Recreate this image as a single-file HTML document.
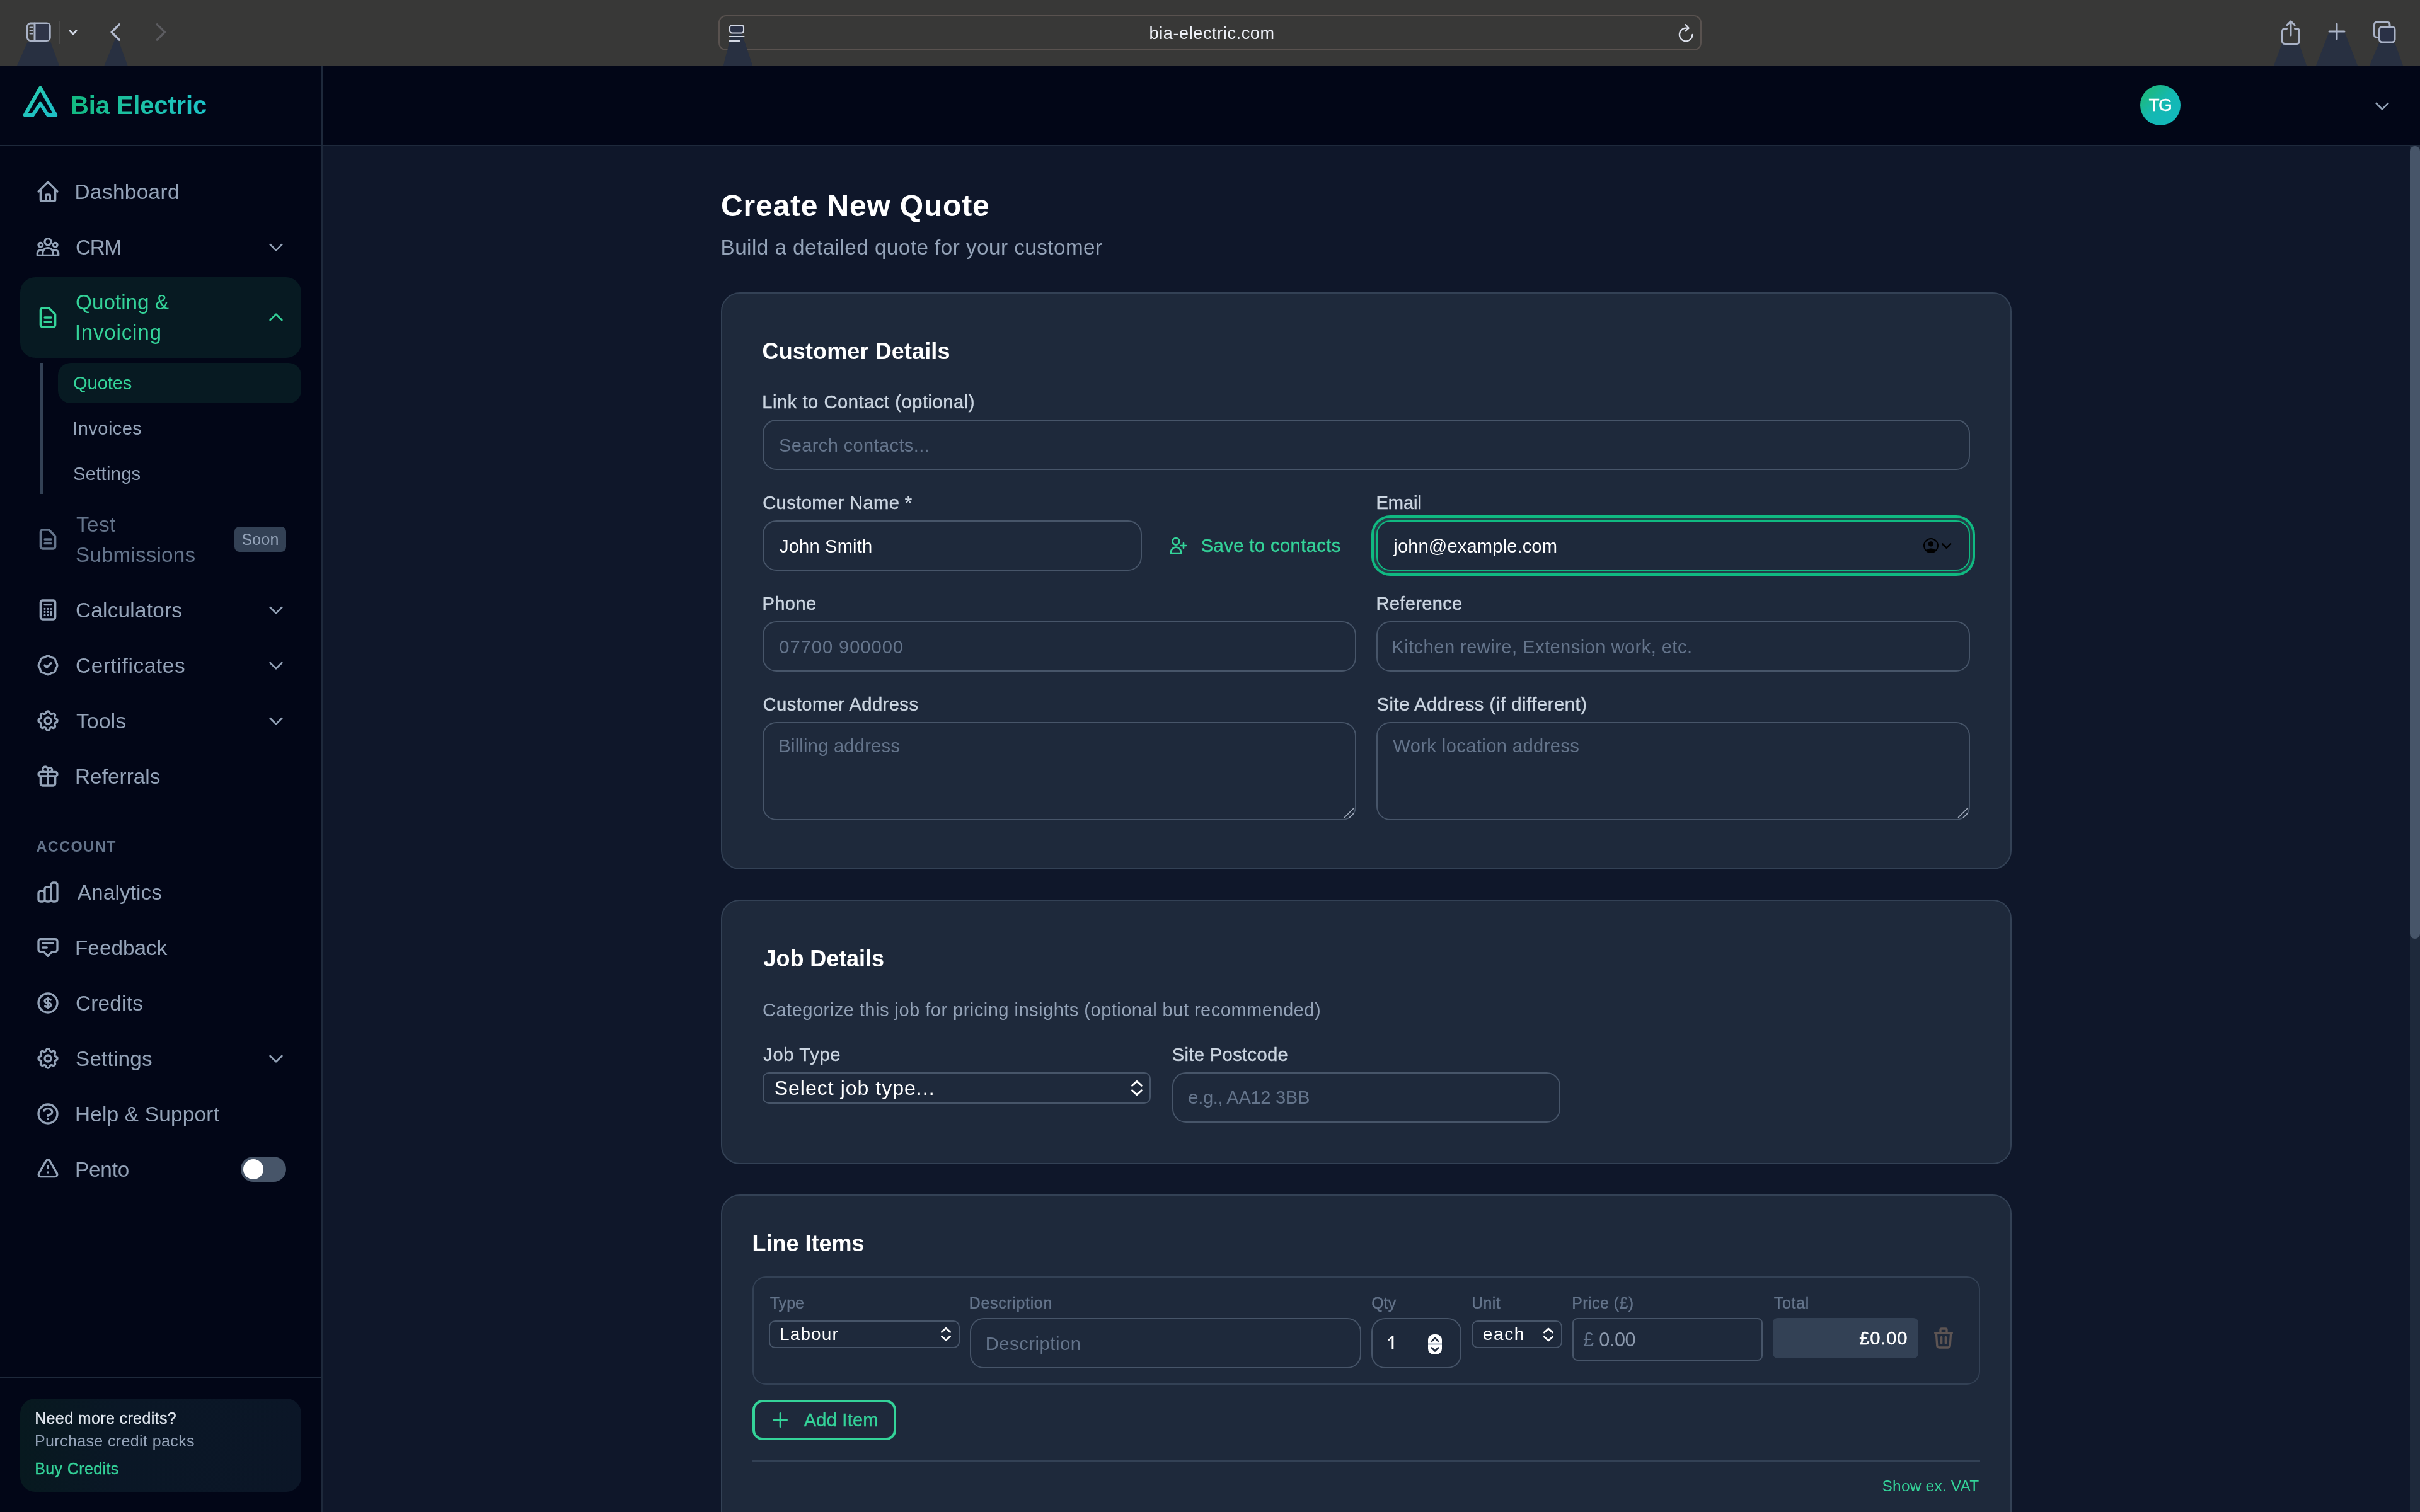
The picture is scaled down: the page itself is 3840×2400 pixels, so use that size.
<!DOCTYPE html>
<html lang="en"><head><meta charset="utf-8"><title>Create New Quote - Bia Electric</title>
<style>
*{box-sizing:border-box;margin:0;padding:0}
html,body{width:3840px;height:2400px;background:#0f172a}
body{font-family:"Liberation Sans",sans-serif;position:relative}
#root{position:absolute;left:0;top:0;width:3840px;height:2400px;overflow:hidden;will-change:transform}
.b{position:absolute;display:block}
.t{position:absolute;white-space:nowrap;font-family:"Liberation Sans",sans-serif}
</style></head>
<body>
<div id="root">
<div class="b" style="left:0px;top:0px;width:3840px;height:104px;background:#383837;"></div>
<svg class="b" style="left:0;top:0" width="3840" height="104"><polygon points="44,66 80,66 94,104 27,104" fill="#283041"/></svg>
<svg class="b" style="left:0;top:0" width="3840" height="104"><polygon points="183.5,60 186.5,60 202.5,104 165.5,104" fill="#283041"/></svg>
<svg class="b" style="left:0;top:0" width="3840" height="104"><polygon points="1161,53 1177,53 1194,104 1148,104" fill="#283041"/></svg>
<svg class="b" style="left:0;top:0" width="3840" height="104"><polygon points="3621,69 3648,69 3660,104 3608,104" fill="#283041"/></svg>
<svg class="b" style="left:0;top:0" width="3840" height="104"><polygon points="3696,50 3720,50 3741,104 3675,104" fill="#283041"/></svg>
<svg class="b" style="left:0;top:0" width="3840" height="104"><polygon points="3775,68 3800,68 3813,104 3760,104" fill="#283041"/></svg>
<svg class="b" style="left:40px;top:33px;" width="44" height="36" viewBox="0 0 44 36" fill="none" stroke="#aab3c7" stroke-width="3" stroke-linecap="round" stroke-linejoin="round"><rect x="3.5" y="4.1" width="35.7" height="27.4" rx="5" fill="none"/><rect x="16" y="5" width="22" height="25.6" fill="#2f3548" stroke="none"/><path d="M15 4.1v27.4"/><path d="M7.5 10.5h4M7.5 15.5h4M7.5 20.5h4" stroke-width="1.8"/></svg>
<div class="b" style="left:94px;top:34px;width:2px;height:36px;background:#4a4a4a;"></div>
<svg class="b" style="left:105.5px;top:42px;" width="20" height="20" viewBox="0 0 20 20" fill="none" stroke="#d3d9e6" stroke-width="3" stroke-linecap="round" stroke-linejoin="round"><path d="M5 6.8l5 5.2 5-5.2"/></svg>
<svg class="b" style="left:170px;top:32px;" width="28" height="38" viewBox="0 0 28 38" fill="none" stroke="#b4bccf" stroke-width="3.2" stroke-linecap="round" stroke-linejoin="round"><path d="M19.2 6.8L7 19l12.2 12.2"/></svg>
<svg class="b" style="left:242px;top:32px;" width="28" height="38" viewBox="0 0 28 38" fill="none" stroke="#5c5c60" stroke-width="3.2" stroke-linecap="round" stroke-linejoin="round"><path d="M7.2 6.8L19.4 19 7.2 31.2"/></svg>
<div class="b" style="left:1140px;top:24px;width:1560px;height:56px;border:2px solid #59524f;border-radius:12px;"></div>
<svg class="b" style="left:0;top:0" width="3840" height="104"><polygon points="1161,53 1177,53 1194,104 1148,104" fill="#283041"/></svg>
<svg class="b" style="left:1154px;top:36px;" width="30" height="34" viewBox="0 0 30 34" fill="none" stroke="#d3d8e4" stroke-width="2.1" stroke-linecap="round" stroke-linejoin="round"><rect x="4" y="4" width="22" height="12.5" rx="3.5" fill="#2a3146"/><path d="M3.5 22h23M3.5 29h16" stroke-width="2.2"/></svg>
<div class="t" style="left:1823.5px;top:33.53px;font-size:27.04px;line-height:39px;color:#eef1f8;letter-spacing:0.616px;">bia-electric.com</div>
<svg class="b" style="left:2660px;top:34.7px;" width="32" height="34" viewBox="0 0 32 34" fill="none" stroke="#dde1ec" stroke-width="2.3" stroke-linecap="round" stroke-linejoin="round"><path d="M25.5 20a10.3 10.3 0 1 1-10.3-10.3h3.3"/><path d="M14.8 4.2l4.9 5.5-5.6 4.6"/></svg>
<svg class="b" style="left:3616px;top:29px;" width="38" height="44" viewBox="0 0 38 44" fill="none" stroke="#aab3c7" stroke-width="3" stroke-linecap="round" stroke-linejoin="round"><path d="M12.5 16.5H9.5a4 4 0 0 0-4 4v16a4 4 0 0 0 4 4h19a4 4 0 0 0 4-4v-16a4 4 0 0 0-4-4h-3"/><path d="M19 27V5.5M12.8 11l6.2-6.2 6.2 6.2"/></svg>
<svg class="b" style="left:3691.6px;top:34.3px;" width="32" height="32" viewBox="0 0 32 32" fill="none" stroke="#aab3c7" stroke-width="3" stroke-linecap="round" stroke-linejoin="round"><path d="M16 4v24M4 16h24"/></svg>
<svg class="b" style="left:3762px;top:30px;" width="44" height="42" viewBox="0 0 44 42" fill="none" stroke="#aab3c7" stroke-width="3" stroke-linecap="round" stroke-linejoin="round"><path d="M12 29.5H9.5a4 4 0 0 1-4-4V9a4 4 0 0 1 4-4h16.5a4 4 0 0 1 4 4v2"/><rect x="13.5" y="12.5" width="24.5" height="24.5" rx="4.5" fill="#2a3146"/></svg>
<div class="b" style="left:0px;top:104px;width:3840px;height:128px;background:#020617;border-bottom:2px solid #1e293b;"></div>
<div class="b" style="left:0px;top:232px;width:512px;height:2168px;background:#020617;"></div>
<div class="b" style="left:510px;top:104px;width:2px;height:2296px;background:#1e293b;"></div>
<svg class="b" style="left:30px;top:128px" width="70" height="66" viewBox="30 128 70 66"><defs><linearGradient id="lg" x1="40" y1="136" x2="70" y2="170" gradientUnits="userSpaceOnUse"><stop offset="0" stop-color="#41e39a"/><stop offset="0.45" stop-color="#25c7b3"/><stop offset="1" stop-color="#1fc0c4"/></linearGradient></defs><path d="M64 139.5L39.5 182.6H52L64 164.5l12 18.1h12.5Z" fill="none" stroke="url(#lg)" stroke-width="5.6" stroke-linejoin="round"/></svg>
<div class="t" style="left:112px;top:136.63px;font-size:40.0px;line-height:60px;color:#10b981;font-weight:700;letter-spacing:-0.15px;background:linear-gradient(90deg,#12b981 0%,#1cbf9f 40%,#1cc4c8 100%);-webkit-background-clip:text;background-clip:text;color:transparent;">Bia Electric</div>
<div class="b" style="left:3396px;top:135px;width:64px;height:64px;background:linear-gradient(135deg,#1fba7a 0%,#1bb98c 25%,#14b8b2 50%,#12b8bf 100%);border-radius:32px;"></div>
<div class="t" style="left:3409.5px;top:147.06px;font-size:28.08px;line-height:40px;color:#ffffff;letter-spacing:-1.751px;-webkit-text-stroke:0.4px #ffffff;">TG</div>
<svg class="b" style="left:3764.0px;top:152.0px;" width="32" height="32" viewBox="0 0 24 24" fill="none" stroke="#94a3b8" stroke-width="2" stroke-linecap="round" stroke-linejoin="round"><path d="M19 9l-7 7-7-7"/></svg>
<svg class="b" style="left:56.0px;top:284.0px;" width="40" height="40" viewBox="0 0 24 24" fill="none" stroke="#94a3b8" stroke-width="2" stroke-linecap="round" stroke-linejoin="round"><path d="M3 12l2-2m0 0l7-7 7 7M5 10v10a1 1 0 001 1h3m10-11l2 2m-2-2v10a1 1 0 01-1 1h-3m-6 0a1 1 0 001-1v-4a1 1 0 011-1h2a1 1 0 011 1v4a1 1 0 001 1m-6 0h6"/></svg>
<div class="t" style="left:118.6px;top:280.86px;font-size:33.28px;line-height:48px;color:#94a3b8;letter-spacing:0.395px;">Dashboard</div>
<svg class="b" style="left:56.0px;top:372.0px;" width="40" height="40" viewBox="0 0 24 24" fill="none" stroke="#94a3b8" stroke-width="2" stroke-linecap="round" stroke-linejoin="round"><path d="M17 20h5v-2a3 3 0 00-5.356-1.857M17 20H7m10 0v-2c0-.656-.126-1.283-.356-1.857M7 20H2v-2a3 3 0 015.356-1.857M7 20v-2c0-.656.126-1.283.356-1.857m0 0a5.002 5.002 0 019.288 0M15 7a3 3 0 11-6 0 3 3 0 016 0zm6 3a2 2 0 11-4 0 2 2 0 014 0zM7 10a2 2 0 11-4 0 2 2 0 014 0z"/></svg>
<div class="t" style="left:120px;top:368.86px;font-size:33.28px;line-height:48px;color:#94a3b8;letter-spacing:-1.373px;">CRM</div>
<svg class="b" style="left:422.0px;top:376.0px;" width="32" height="32" viewBox="0 0 24 24" fill="none" stroke="#94a3b8" stroke-width="2" stroke-linecap="round" stroke-linejoin="round"><path d="M19 9l-7 7-7-7"/></svg>
<div class="b" style="left:32px;top:440px;width:446px;height:128px;background:#071a22;border-radius:24px;"></div>
<svg class="b" style="left:56.0px;top:484.0px;" width="40" height="40" viewBox="0 0 24 24" fill="none" stroke="#34d399" stroke-width="2" stroke-linecap="round" stroke-linejoin="round"><path d="M9 12h6m-6 4h6m2 5H7a2 2 0 01-2-2V5a2 2 0 012-2h5.586a1 1 0 01.707.293l5.414 5.414a1 1 0 01.293.707V19a2 2 0 01-2 2z"/></svg>
<div class="t" style="left:120px;top:456.46px;font-size:33.28px;line-height:48px;color:#34d399;letter-spacing:0.006px;">Quoting &amp;</div>
<div class="t" style="left:118.7px;top:504.46px;font-size:33.28px;line-height:48px;color:#34d399;letter-spacing:0.751px;">Invoicing</div>
<svg class="b" style="left:422.0px;top:488.0px;" width="32" height="32" viewBox="0 0 24 24" fill="none" stroke="#34d399" stroke-width="2" stroke-linecap="round" stroke-linejoin="round"><path d="M5 15l7-7 7 7"/></svg>
<div class="b" style="left:64px;top:576px;width:4px;height:208px;background:#334155;"></div>
<div class="b" style="left:92px;top:576px;width:386px;height:64px;background:#071a22;border-radius:20px;"></div>
<div class="t" style="left:116px;top:586.9px;font-size:29.12px;line-height:42px;color:#34d399;letter-spacing:-0.1px;">Quotes</div>
<div class="t" style="left:115.3px;top:658.9px;font-size:29.12px;line-height:42px;color:#94a3b8;letter-spacing:0.395px;">Invoices</div>
<div class="t" style="left:116px;top:731.2px;font-size:29.12px;line-height:42px;color:#94a3b8;letter-spacing:0.282px;">Settings</div>
<svg class="b" style="left:56.0px;top:836.0px;" width="40" height="40" viewBox="0 0 24 24" fill="none" stroke="#64748b" stroke-width="2" stroke-linecap="round" stroke-linejoin="round"><path d="M9 12h6m-6 4h6m2 5H7a2 2 0 01-2-2V5a2 2 0 012-2h5.586a1 1 0 01.707.293l5.414 5.414a1 1 0 01.293.707V19a2 2 0 01-2 2z"/></svg>
<div class="t" style="left:121px;top:809.26px;font-size:33.28px;line-height:48px;color:#64748b;letter-spacing:0.412px;">Test</div>
<div class="t" style="left:120px;top:856.96px;font-size:33.28px;line-height:48px;color:#64748b;letter-spacing:0.145px;">Submissions</div>
<div class="b" style="left:372px;top:836px;width:82px;height:40px;background:#334155;border-radius:8px;"></div>
<div class="t" style="left:383.5px;top:837.85px;font-size:24.96px;line-height:36px;color:#94a3b8;letter-spacing:0.2px;">Soon</div>
<svg class="b" style="left:56.0px;top:948.0px;" width="40" height="40" viewBox="0 0 24 24" fill="none" stroke="#94a3b8" stroke-width="2" stroke-linecap="round" stroke-linejoin="round"><path d="M9 7h6m0 10v-3m-3 3h.01M9 17h.01M9 14h.01M12 14h.01M15 11h.01M12 11h.01M9 11h.01M7 21h10a2 2 0 002-2V5a2 2 0 00-2-2H7a2 2 0 00-2 2v14a2 2 0 002 2z"/></svg>
<div class="t" style="left:120px;top:944.86px;font-size:33.28px;line-height:48px;color:#94a3b8;letter-spacing:0.244px;">Calculators</div>
<svg class="b" style="left:422.0px;top:952.0px;" width="32" height="32" viewBox="0 0 24 24" fill="none" stroke="#94a3b8" stroke-width="2" stroke-linecap="round" stroke-linejoin="round"><path d="M19 9l-7 7-7-7"/></svg>
<svg class="b" style="left:56.0px;top:1036.0px;" width="40" height="40" viewBox="0 0 24 24" fill="none" stroke="#94a3b8" stroke-width="2" stroke-linecap="round" stroke-linejoin="round"><path d="M9 12l2 2 4-4M7.835 4.697a3.42 3.42 0 001.946-.806 3.42 3.42 0 014.438 0 3.42 3.42 0 001.946.806 3.42 3.42 0 013.138 3.138 3.42 3.42 0 00.806 1.946 3.42 3.42 0 010 4.438 3.42 3.42 0 00-.806 1.946 3.42 3.42 0 01-3.138 3.138 3.42 3.42 0 00-1.946.806 3.42 3.42 0 01-4.438 0 3.42 3.42 0 00-1.946-.806 3.42 3.42 0 01-3.138-3.138 3.42 3.42 0 00-.806-1.946 3.42 3.42 0 010-4.438 3.42 3.42 0 00.806-1.946 3.42 3.42 0 013.138-3.138z"/></svg>
<div class="t" style="left:120px;top:1032.86px;font-size:33.28px;line-height:48px;color:#94a3b8;letter-spacing:0.66px;">Certificates</div>
<svg class="b" style="left:422.0px;top:1040.0px;" width="32" height="32" viewBox="0 0 24 24" fill="none" stroke="#94a3b8" stroke-width="2" stroke-linecap="round" stroke-linejoin="round"><path d="M19 9l-7 7-7-7"/></svg>
<svg class="b" style="left:56.0px;top:1124.0px;" width="40" height="40" viewBox="0 0 24 24" fill="none" stroke="#94a3b8" stroke-width="2" stroke-linecap="round" stroke-linejoin="round"><path d="M10.325 4.317c.426-1.756 2.924-1.756 3.35 0a1.724 1.724 0 002.573 1.066c1.543-.94 3.31.826 2.37 2.37a1.724 1.724 0 001.065 2.572c1.756.426 1.756 2.924 0 3.35a1.724 1.724 0 00-1.066 2.573c.94 1.543-.826 3.31-2.37 2.37a1.724 1.724 0 00-2.572 1.065c-.426 1.756-2.924 1.756-3.35 0a1.724 1.724 0 00-2.573-1.066c-1.543.94-3.31-.826-2.37-2.37a1.724 1.724 0 00-1.065-2.572c-1.756-.426-1.756-2.924 0-3.35a1.724 1.724 0 001.066-2.573c-.94-1.543.826-3.31 2.37-2.37.996.608 2.296.07 2.572-1.065zM15 12a3 3 0 11-6 0 3 3 0 016 0z"/></svg>
<div class="t" style="left:121px;top:1120.86px;font-size:33.28px;line-height:48px;color:#94a3b8;letter-spacing:0.394px;">Tools</div>
<svg class="b" style="left:422.0px;top:1128.0px;" width="32" height="32" viewBox="0 0 24 24" fill="none" stroke="#94a3b8" stroke-width="2" stroke-linecap="round" stroke-linejoin="round"><path d="M19 9l-7 7-7-7"/></svg>
<svg class="b" style="left:56.0px;top:1212.0px;" width="40" height="40" viewBox="0 0 24 24" fill="none" stroke="#94a3b8" stroke-width="2" stroke-linecap="round" stroke-linejoin="round"><path d="M12 8v13m0-13V6a2 2 0 112 2h-2zm0 0V5.5A2.5 2.5 0 109.5 8H12zm-7 4h14M5 12a2 2 0 110-4h14a2 2 0 110 4M5 12v7a2 2 0 002 2h10a2 2 0 002-2v-7"/></svg>
<div class="t" style="left:119px;top:1208.86px;font-size:33.28px;line-height:48px;color:#94a3b8;letter-spacing:0.061px;">Referrals</div>
<div class="t" style="left:57.5px;top:1325.85px;font-size:23.52px;line-height:36px;color:#64748b;font-weight:700;letter-spacing:1.383px;">ACCOUNT</div>
<svg class="b" style="left:56.0px;top:1396.0px;" width="40" height="40" viewBox="0 0 24 24" fill="none" stroke="#94a3b8" stroke-width="2" stroke-linecap="round" stroke-linejoin="round"><path d="M9 19v-6a2 2 0 00-2-2H5a2 2 0 00-2 2v6a2 2 0 002 2h2a2 2 0 002-2zm0 0V9a2 2 0 012-2h2a2 2 0 012 2v10m-6 0a2 2 0 002 2h2a2 2 0 002-2m0 0V5a2 2 0 012-2h2a2 2 0 012 2v14a2 2 0 01-2 2h-2a2 2 0 01-2-2z"/></svg>
<div class="t" style="left:122.8px;top:1392.86px;font-size:33.28px;line-height:48px;color:#94a3b8;letter-spacing:0.14px;">Analytics</div>
<svg class="b" style="left:56.0px;top:1484.0px;" width="40" height="40" viewBox="0 0 24 24" fill="none" stroke="#94a3b8" stroke-width="2" stroke-linecap="round" stroke-linejoin="round"><path d="M7 8h10M7 12h4m1 8l-4-4H5a2 2 0 01-2-2V6a2 2 0 012-2h14a2 2 0 012 2v8a2 2 0 01-2 2h-3l-4 4z"/></svg>
<div class="t" style="left:119px;top:1480.86px;font-size:33.28px;line-height:48px;color:#94a3b8;letter-spacing:0.049px;">Feedback</div>
<svg class="b" style="left:56.0px;top:1572.0px;" width="40" height="40" viewBox="0 0 24 24" fill="none" stroke="#94a3b8" stroke-width="2" stroke-linecap="round" stroke-linejoin="round"><path d="M12 8c-1.657 0-3 .895-3 2s1.343 2 3 2 3 .895 3 2-1.343 2-3 2m0-8c1.11 0 2.08.402 2.599 1M12 8V7m0 1v8m0 0v1m0-1c-1.11 0-2.08-.402-2.599-1M21 12a9 9 0 11-18 0 9 9 0 0118 0z"/></svg>
<div class="t" style="left:120px;top:1568.86px;font-size:33.28px;line-height:48px;color:#94a3b8;letter-spacing:0.244px;">Credits</div>
<svg class="b" style="left:56.0px;top:1660.0px;" width="40" height="40" viewBox="0 0 24 24" fill="none" stroke="#94a3b8" stroke-width="2" stroke-linecap="round" stroke-linejoin="round"><path d="M10.325 4.317c.426-1.756 2.924-1.756 3.35 0a1.724 1.724 0 002.573 1.066c1.543-.94 3.31.826 2.37 2.37a1.724 1.724 0 001.065 2.572c1.756.426 1.756 2.924 0 3.35a1.724 1.724 0 00-1.066 2.573c.94 1.543-.826 3.31-2.37 2.37a1.724 1.724 0 00-2.572 1.065c-.426 1.756-2.924 1.756-3.35 0a1.724 1.724 0 00-2.573-1.066c-1.543.94-3.31-.826-2.37-2.37a1.724 1.724 0 00-1.065-2.572c-1.756-.426-1.756-2.924 0-3.35a1.724 1.724 0 001.066-2.573c-.94-1.543.826-3.31 2.37-2.37.996.608 2.296.07 2.572-1.065zM15 12a3 3 0 11-6 0 3 3 0 016 0z"/></svg>
<div class="t" style="left:120px;top:1656.86px;font-size:33.28px;line-height:48px;color:#94a3b8;letter-spacing:0.205px;">Settings</div>
<svg class="b" style="left:422.0px;top:1664.0px;" width="32" height="32" viewBox="0 0 24 24" fill="none" stroke="#94a3b8" stroke-width="2" stroke-linecap="round" stroke-linejoin="round"><path d="M19 9l-7 7-7-7"/></svg>
<svg class="b" style="left:56.0px;top:1748.0px;" width="40" height="40" viewBox="0 0 24 24" fill="none" stroke="#94a3b8" stroke-width="2" stroke-linecap="round" stroke-linejoin="round"><path d="M8.228 9c.549-1.165 2.03-2 3.772-2 2.21 0 4 1.343 4 3 0 1.4-1.278 2.575-3.006 2.907-.542.104-.994.54-.994 1.093m0 3h.01M21 12a9 9 0 11-18 0 9 9 0 0118 0z"/></svg>
<div class="t" style="left:119px;top:1744.86px;font-size:33.28px;line-height:48px;color:#94a3b8;letter-spacing:0.242px;">Help &amp; Support</div>
<svg class="b" style="left:56.0px;top:1836.0px;" width="40" height="40" viewBox="0 0 24 24" fill="none" stroke="#94a3b8" stroke-width="2" stroke-linecap="round" stroke-linejoin="round"><path d="M12 9v2m0 4h.01m-6.938 4h13.856c1.54 0 2.502-1.667 1.732-3L13.732 4c-.77-1.333-2.694-1.333-3.464 0L3.34 16c-.77 1.333.192 3 1.732 3z"/></svg>
<div class="t" style="left:119px;top:1832.86px;font-size:33.28px;line-height:48px;color:#94a3b8;letter-spacing:-0.183px;">Pento</div>
<div class="b" style="left:382px;top:1836px;width:72px;height:40px;background:#475569;border-radius:20px;"></div>
<div class="b" style="left:386px;top:1840px;width:32px;height:32px;background:#ffffff;border-radius:16px;"></div>
<div class="b" style="left:0px;top:2186px;width:510px;height:2px;background:#1e293b;"></div>
<div class="b" style="left:32px;top:2220px;width:446px;height:148px;background:linear-gradient(90deg,#07191f 0%,#0a1726 35%,#0b1627 100%);border-radius:24px;"></div>
<div class="t" style="left:55.18px;top:2233.15px;font-size:24.96px;line-height:36px;color:#e2e8f0;letter-spacing:0.399px;-webkit-text-stroke:0.36px #e2e8f0;">Need more credits?</div>
<div class="t" style="left:55px;top:2269.15px;font-size:24.96px;line-height:36px;color:#94a3b8;letter-spacing:0.4px;">Purchase credit packs</div>
<div class="t" style="left:55.18px;top:2313.15px;font-size:24.96px;line-height:36px;color:#34d399;letter-spacing:0.415px;-webkit-text-stroke:0.36px #34d399;">Buy Credits</div>
<div class="b" style="left:3824px;top:232px;width:16px;height:2168px;background:#1e293b;"></div>
<div class="b" style="left:3824px;top:232px;width:16px;height:1258px;background:#475569;border-radius:8px;"></div>
<div class="t" style="left:1144px;top:291.36px;font-size:48.0px;line-height:72px;color:#ffffff;font-weight:700;letter-spacing:0.817px;">Create New Quote</div>
<div class="t" style="left:1143.5px;top:368.96px;font-size:33.28px;line-height:48px;color:#94a3b8;letter-spacing:0.45px;">Build a detailed quote for your customer</div>
<div class="b" style="left:1144px;top:464px;width:2048px;height:916px;background:#1e293b;border:2px solid #334155;border-radius:30px;"></div>
<div class="t" style="left:1209.5px;top:530.82px;font-size:36.0px;line-height:54px;color:#ffffff;font-weight:700;letter-spacing:0.129px;">Customer Details</div>
<div class="t" style="left:1209.21px;top:616.9px;font-size:29.12px;line-height:42px;color:#cbd5e1;letter-spacing:0.546px;-webkit-text-stroke:0.42px #cbd5e1;">Link to Contact (optional)</div>
<div class="b" style="left:1210px;top:666px;width:1916px;height:80px;border:2px solid #475569;border-radius:22px;"></div>
<div class="t" style="left:1236px;top:685.9px;font-size:29.12px;line-height:42px;color:#64748b;letter-spacing:0.335px;">Search contacts...</div>
<div class="t" style="left:1210.21px;top:776.9px;font-size:29.12px;line-height:42px;color:#cbd5e1;letter-spacing:0.399px;-webkit-text-stroke:0.42px #cbd5e1;">Customer Name *</div>
<div class="b" style="left:1210px;top:826px;width:602px;height:80px;border:2px solid #475569;border-radius:22px;"></div>
<div class="t" style="left:1237px;top:845.9px;font-size:29.12px;line-height:42px;color:#ffffff;letter-spacing:0.175px;">John Smith</div>
<svg class="b" style="left:1854.0px;top:850.0px;" width="32" height="32" viewBox="0 0 24 24" fill="none" stroke="#34d399" stroke-width="2" stroke-linecap="round" stroke-linejoin="round"><path d="M18 9v3m0 0v3m0-3h3m-3 0h-3m-2-5a4 4 0 11-8 0 4 4 0 018 0zM3 20a6 6 0 0112 0v1H3v-1z"/></svg>
<div class="t" style="left:1905.71px;top:844.9px;font-size:29.12px;line-height:42px;color:#34d399;letter-spacing:0.428px;-webkit-text-stroke:0.42px #34d399;">Save to contacts</div>
<div class="t" style="left:2183.51px;top:776.9px;font-size:29.12px;line-height:42px;color:#cbd5e1;letter-spacing:-0.085px;-webkit-text-stroke:0.42px #cbd5e1;">Email</div>
<div class="b" style="left:2184px;top:826px;width:942px;height:80px;border:2px solid #10b981;border-radius:22px;box-shadow:0 0 0 4px #243f49,0 0 0 8px #10b981;"></div>
<div class="t" style="left:2211.3px;top:845.9px;font-size:29.12px;line-height:42px;color:#ffffff;letter-spacing:0.13px;">john@example.com</div>
<svg class="b" style="left:3050px;top:852px" width="50" height="28" viewBox="3050 852 50 28"><defs><clipPath id="cc"><circle cx="3064" cy="866" r="11"/></clipPath></defs><circle cx="3064" cy="866" r="11" fill="none" stroke="#000" stroke-width="2"/><circle cx="3064" cy="863.4" r="4.1" fill="#000"/><ellipse cx="3064" cy="878.5" rx="9.5" ry="8" fill="#000" clip-path="url(#cc)"/><path d="M3082.3 863.5l6.4 6.2 6.4-6.2" fill="none" stroke="#000" stroke-width="2.6" stroke-linecap="round" stroke-linejoin="round"/></svg>
<div class="t" style="left:1209.61px;top:936.9px;font-size:29.12px;line-height:42px;color:#cbd5e1;letter-spacing:0.324px;-webkit-text-stroke:0.42px #cbd5e1;">Phone</div>
<div class="b" style="left:1210px;top:986px;width:942px;height:80px;border:2px solid #475569;border-radius:22px;"></div>
<div class="t" style="left:1236.3px;top:1005.9px;font-size:29.12px;line-height:42px;color:#64748b;letter-spacing:0.956px;">07700 900000</div>
<div class="t" style="left:2183.51px;top:936.9px;font-size:29.12px;line-height:42px;color:#cbd5e1;letter-spacing:0.296px;-webkit-text-stroke:0.42px #cbd5e1;">Reference</div>
<div class="b" style="left:2184px;top:986px;width:942px;height:80px;border:2px solid #475569;border-radius:22px;"></div>
<div class="t" style="left:2208.3px;top:1005.9px;font-size:29.12px;line-height:42px;color:#64748b;letter-spacing:0.446px;">Kitchen rewire, Extension work, etc.</div>
<div class="t" style="left:1210.61px;top:1096.9px;font-size:29.12px;line-height:42px;color:#cbd5e1;letter-spacing:0.459px;-webkit-text-stroke:0.42px #cbd5e1;">Customer Address</div>
<div class="b" style="left:1210px;top:1146px;width:942px;height:156px;border:2px solid #475569;border-radius:22px;"></div>
<div class="t" style="left:1235.3px;top:1163.1px;font-size:29.12px;line-height:42px;color:#64748b;letter-spacing:0.232px;">Billing address</div>
<svg class="b" style="left:2130px;top:1280px;" width="20" height="20" viewBox="0 0 20 20" fill="none" stroke="#a3adbd" stroke-width="1.6" stroke-linecap="round" stroke-linejoin="round"><path d="M3.5 17.5L17.5 3.5M11.5 17.5l6-6"/></svg>
<div class="t" style="left:2184.51px;top:1096.9px;font-size:29.12px;line-height:42px;color:#cbd5e1;letter-spacing:0.583px;-webkit-text-stroke:0.42px #cbd5e1;">Site Address (if different)</div>
<div class="b" style="left:2184px;top:1146px;width:942px;height:156px;border:2px solid #475569;border-radius:22px;"></div>
<div class="t" style="left:2210.3px;top:1163.1px;font-size:29.12px;line-height:42px;color:#64748b;letter-spacing:0.405px;">Work location address</div>
<svg class="b" style="left:3104px;top:1280px;" width="20" height="20" viewBox="0 0 20 20" fill="none" stroke="#a3adbd" stroke-width="1.6" stroke-linecap="round" stroke-linejoin="round"><path d="M3.5 17.5L17.5 3.5M11.5 17.5l6-6"/></svg>
<div class="b" style="left:1144px;top:1428px;width:2048px;height:420px;background:#1e293b;border:2px solid #334155;border-radius:30px;"></div>
<div class="t" style="left:1211.6px;top:1494.82px;font-size:36.0px;line-height:54px;color:#ffffff;font-weight:700;letter-spacing:-0.074px;">Job Details</div>
<div class="t" style="left:1210px;top:1581.5px;font-size:29.12px;line-height:42px;color:#94a3b8;letter-spacing:0.451px;">Categorize this job for pricing insights (optional but recommended)</div>
<div class="t" style="left:1211.21px;top:1652.9px;font-size:29.12px;line-height:42px;color:#cbd5e1;letter-spacing:0.663px;-webkit-text-stroke:0.42px #cbd5e1;">Job Type</div>
<div class="b" style="left:1210px;top:1702px;width:616px;height:50px;border:2px solid #475569;border-radius:10px;"></div>
<div class="t" style="left:1228.7px;top:1703.31px;font-size:32.0px;line-height:48px;color:#ffffff;letter-spacing:1.018px;">Select job type...</div>
<svg class="b" style="left:0;top:0" width="3840" height="2400" fill="none" stroke="#ffffff" stroke-width="3.1" stroke-linecap="round" stroke-linejoin="round"><path d="M1796.6000000000001 1723.1l7.3 -6.6l7.3 6.6M1796.6000000000001 1730.9l7.3 6.6l7.3 -6.6"/></svg>
<div class="t" style="left:1859.71px;top:1652.9px;font-size:29.12px;line-height:42px;color:#cbd5e1;letter-spacing:0.371px;-webkit-text-stroke:0.42px #cbd5e1;">Site Postcode</div>
<div class="b" style="left:1860px;top:1702px;width:616px;height:80px;border:2px solid #475569;border-radius:22px;"></div>
<div class="t" style="left:1885.3px;top:1721.4px;font-size:29.12px;line-height:42px;color:#64748b;letter-spacing:-0.341px;">e.g., AA12 3BB</div>
<div class="b" style="left:1144px;top:1896px;width:2048px;height:700px;background:#1e293b;border:2px solid #334155;border-radius:30px;"></div>
<div class="t" style="left:1193.5px;top:1946.82px;font-size:36.0px;line-height:54px;color:#ffffff;font-weight:700;letter-spacing:-0.003px;">Line Items</div>
<div class="b" style="left:1194px;top:2026px;width:1948px;height:172px;border:2px solid #334155;border-radius:21px;"></div>
<div class="t" style="left:1221.68px;top:2049.75px;font-size:24.96px;line-height:36px;color:#64748b;letter-spacing:0.074px;-webkit-text-stroke:0.36px #64748b;">Type</div>
<div class="b" style="left:1220px;top:2096px;width:303px;height:44px;border:2px solid #475569;border-radius:10px;"></div>
<div class="t" style="left:1237px;top:2097.49px;font-size:28.0px;line-height:42px;color:#ffffff;letter-spacing:1.128px;">Labour</div>
<svg class="b" style="left:0;top:0" width="3840" height="2400" fill="none" stroke="#ffffff" stroke-width="2.8" stroke-linecap="round" stroke-linejoin="round"><path d="M1494.4 2114.3l6.6 -6l6.6 6M1494.4 2121.3l6.6 6l6.6 -6"/></svg>
<div class="t" style="left:1537.78px;top:2049.75px;font-size:24.96px;line-height:36px;color:#64748b;letter-spacing:0.67px;-webkit-text-stroke:0.36px #64748b;">Description</div>
<div class="b" style="left:1539px;top:2092px;width:621px;height:80px;border:2px solid #475569;border-radius:22px;"></div>
<div class="t" style="left:1563.7px;top:2112.3px;font-size:29.12px;line-height:42px;color:#64748b;letter-spacing:0.559px;">Description</div>
<div class="t" style="left:2176.18px;top:2049.75px;font-size:24.96px;line-height:36px;color:#64748b;letter-spacing:0.149px;-webkit-text-stroke:0.36px #64748b;">Qty</div>
<div class="b" style="left:2176px;top:2092px;width:143px;height:80px;border:2px solid #475569;border-radius:22px;"></div>
<svg class="b" style="left:2200px;top:2118px" width="14" height="26" viewBox="2200 2118 14 26"><polygon points="2208.7,2120.9 2211.3,2120.9 2211.3,2142.1 2208.4,2142.1 2208.4,2124.1 2203.6,2128.8 2202.7,2126.5" fill="#fff"/></svg>
<div class="b" style="left:2266px;top:2118px;width:22px;height:32px;background:#ffffff;border-radius:9px;"></div>
<div class="b" style="left:2266px;top:2132.3px;width:22px;height:2.7px;background:#cbd2db;"></div>
<svg class="b" style="left:2266px;top:2117.5px" width="22" height="33" viewBox="0 0 22 33" fill="none" stroke="#1e293b" stroke-width="2.6" stroke-linecap="round" stroke-linejoin="round"><path d="M6 10.8l5-5 5 5M6 21.5l5 5 5-5"/></svg>
<div class="t" style="left:2335.18px;top:2049.75px;font-size:24.96px;line-height:36px;color:#64748b;letter-spacing:0.399px;-webkit-text-stroke:0.36px #64748b;">Unit</div>
<div class="b" style="left:2335px;top:2096px;width:144px;height:44px;border:2px solid #475569;border-radius:10px;"></div>
<div class="t" style="left:2352.8px;top:2097.29px;font-size:28.0px;line-height:42px;color:#ffffff;letter-spacing:1.618px;">each</div>
<svg class="b" style="left:0;top:0" width="3840" height="2400" fill="none" stroke="#ffffff" stroke-width="2.8" stroke-linecap="round" stroke-linejoin="round"><path d="M2450.4 2115.0l6.6 -6l6.6 6M2450.4 2122.0l6.6 6l6.6 -6"/></svg>
<div class="t" style="left:2494.18px;top:2049.75px;font-size:24.96px;line-height:36px;color:#64748b;letter-spacing:0.459px;-webkit-text-stroke:0.36px #64748b;">Price (£)</div>
<div class="b" style="left:2495px;top:2092px;width:302px;height:68px;border:2px solid #475569;border-radius:8px;"></div>
<div class="t" style="left:2512px;top:2104.66px;font-size:30.68px;line-height:44px;color:#64748b;letter-spacing:0.43px;">£</div>
<div class="t" style="left:2537.3px;top:2104.66px;font-size:30.68px;line-height:44px;color:#8c99ad;letter-spacing:-0.479px;">0.00</div>
<div class="t" style="left:2814.68px;top:2049.75px;font-size:24.96px;line-height:36px;color:#64748b;letter-spacing:0.744px;-webkit-text-stroke:0.36px #64748b;">Total</div>
<div class="b" style="left:2813px;top:2092px;width:231px;height:64px;background:#334155;border-radius:8px;"></div>
<div class="t" style="left:2950.21px;top:2102.9px;font-size:29.12px;line-height:42px;color:#ffffff;letter-spacing:0.831px;-webkit-text-stroke:0.42px #ffffff;">£0.00</div>
<svg class="b" style="left:3064.0px;top:2104.0px;" width="40" height="40" viewBox="0 0 24 24" fill="none" stroke="#5d5453" stroke-width="2" stroke-linecap="round" stroke-linejoin="round"><path d="M19 7l-.867 12.142A2 2 0 0116.138 21H7.862a2 2 0 01-1.995-1.858L5 7m5 4v6m4-6v6m1-10V4a1 1 0 00-1-1h-4a1 1 0 00-1 1v3M4 7h16"/></svg>
<div class="b" style="left:1194px;top:2222px;width:228px;height:64px;border:4px solid #34d399;border-radius:16px;"></div>
<svg class="b" style="left:1222.0px;top:2238.0px;" width="32" height="32" viewBox="0 0 24 24" fill="none" stroke="#34d399" stroke-width="2" stroke-linecap="round" stroke-linejoin="round"><path d="M12 4v16m8-8H4"/></svg>
<div class="t" style="left:1275.71px;top:2233.1px;font-size:29.12px;line-height:42px;color:#34d399;letter-spacing:0.191px;-webkit-text-stroke:0.42px #34d399;">Add Item</div>
<div class="b" style="left:1194px;top:2318px;width:1948px;height:2px;background:#334155;"></div>
<div class="t" style="left:2986.6px;top:2341.11px;font-size:24.48px;line-height:36px;color:#34d399;letter-spacing:0.204px;">Show ex. VAT</div>
</div>
</body></html>
